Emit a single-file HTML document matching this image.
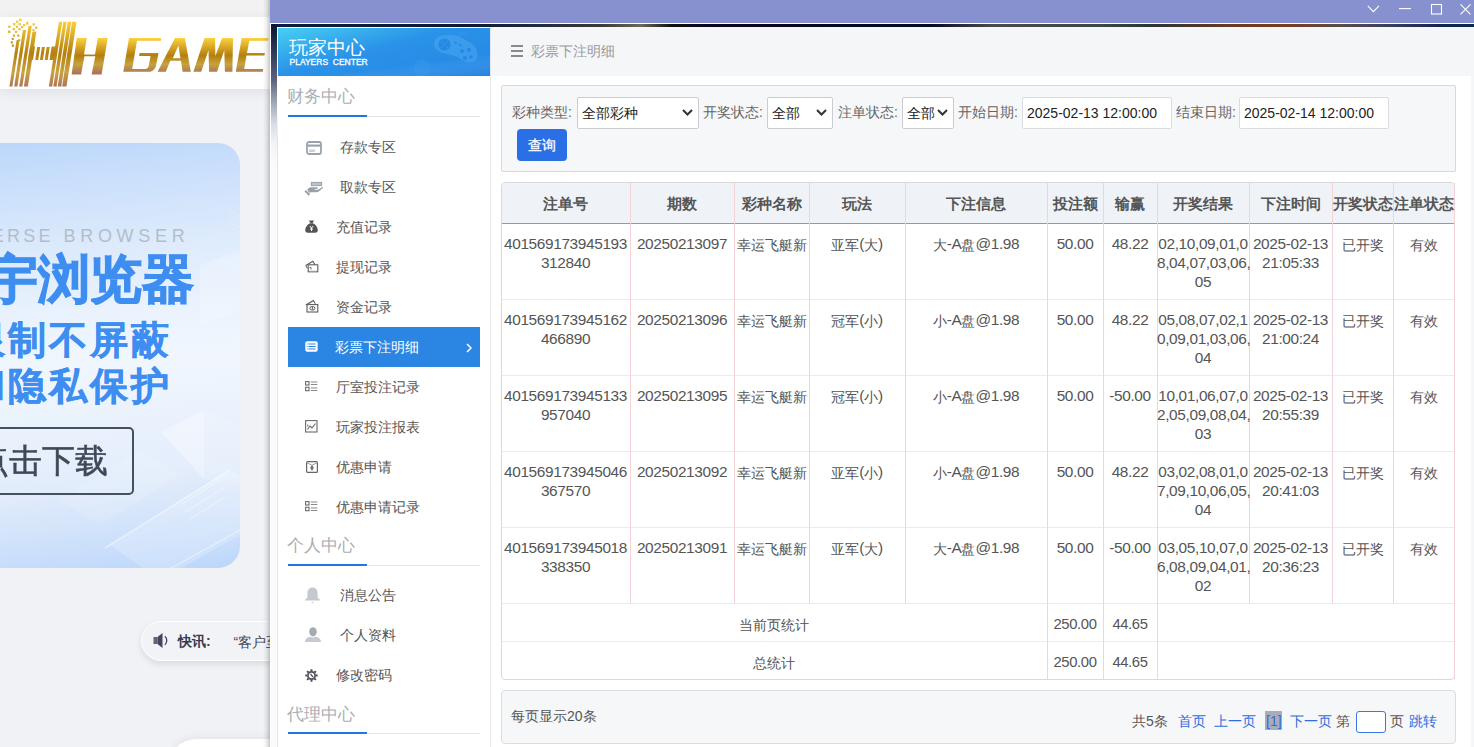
<!DOCTYPE html>
<html><head><meta charset="utf-8">
<style>
*{box-sizing:border-box;margin:0;padding:0}
html,body{width:1474px;height:747px;overflow:hidden}
body{position:relative;background:#f1f2f6;font-family:"Liberation Sans",sans-serif;color:#555}
.abs{position:absolute}
/* left page */
#topstrip{left:0;top:0;width:270px;height:17px;background:#f2f2f3}
#hdr{left:0;top:17px;width:270px;height:72px;background:#fff;box-shadow:0 3px 12px rgba(0,0,0,.08)}
#banner{left:-60px;top:143px;width:300px;height:425px;border-radius:22px;background:linear-gradient(180deg,rgba(255,255,255,0) 0%,rgba(255,255,255,.35) 50%,rgba(255,255,255,0) 100%),linear-gradient(172deg,#bad6fb 0%,#d9e8fc 30%,#e9f2fd 52%,#dde9fb 78%,#bcd7fa 100%);overflow:hidden}
#pill{left:141px;top:621px;width:200px;height:40px;border-radius:20px;background:#f2f3f7;border:1.5px solid #fff;box-shadow:0 3px 6px rgba(0,0,0,.10)}
#bshape{left:167px;top:739px;width:200px;height:60px;border-radius:32px;background:#fff;box-shadow:0 -2px 8px rgba(0,0,0,.06)}
#shadow{left:263px;top:0;width:7px;height:747px;background:linear-gradient(90deg,rgba(0,0,0,0),rgba(0,0,0,.07) 50%,rgba(0,0,0,.22))}
/* window */
#title{left:270px;top:0;width:1204px;height:23px;background:#8791cf}
#wline{left:270px;top:23px;width:1204px;height:1px;background:#fff}
#ftop{left:271px;top:24px;width:1203px;height:3px;background:linear-gradient(90deg,#0e1c3c 0px,#0d1a36 200px,#3a3a36 330px,#6a6a58 370px,#101010 400px,#060818 440px,#070a1c 660px,#4a4a4a 720px,#3e4646 830px,#2a3434 880px,#6a3a22 960px,#7a3c1e 1010px,#5a4c48 1070px,#3a3e58 1120px,#14244e 1170px,#0a2a4a 1203px)}
#fleft{left:270px;top:24px;width:7px;height:723px;background:linear-gradient(180deg,#0b1530 0px,#1e2a48 16px,#3c4664 36px,#5a6480 56px,#a3aab8 80px,#d8dce3 100px,#f3f4f6 120px,#fafafa 140px,#fafafa 100%);border-left:1px solid #fff}
#fline{left:277px;top:110px;width:1px;height:637px;background:linear-gradient(180deg,rgba(230,230,230,0),#e4e4e4 30px)}
#side{left:277px;top:27px;width:214px;height:720px;background:#fff;border-right:1px solid #e3e6eb}
#main{left:491px;top:27px;width:980px;height:720px;background:#fff}
#rstrip{left:1471px;top:27px;width:3px;height:720px;background:#f5f6f8}


/* sidebar */
#shead{left:278px;top:28px;width:212px;height:48px;background:linear-gradient(165deg,#47d0f4 0%,#34a8ec 28%,#2a92e8 45%,#2486e4 100%);overflow:hidden}
#shead .t1{position:absolute;left:11px;top:8.5px;font-size:19px;line-height:22px;color:#fff;white-space:nowrap}
#shead .t2{position:absolute;left:11.5px;top:29px;font-size:8.5px;font-weight:normal;letter-spacing:0px;-webkit-text-stroke:.3px #fff;line-height:10px;color:#fff;white-space:nowrap}
.sh{position:absolute;left:287px;font-size:17px;line-height:20px;color:#a9aeb6;white-space:nowrap}
.ul{position:absolute;left:288px;width:192px;height:1px;background:#e2e4e8}
.ul i{position:absolute;left:0;top:-1px;width:79px;height:2px;background:#1f78e0}
.mi{position:absolute;font-size:14px;line-height:18px;color:#555;white-space:nowrap}
.ico{position:absolute}
#act{left:288px;top:327px;width:192px;height:40px;background:#2b86e3}
/* main content */
#crumb{left:491px;top:27px;width:980px;height:49px;background:#f5f6f8}
#crumb .ic{position:absolute;left:20px;top:18px;width:12px;height:2.2px;background:#8a8a8a;box-shadow:0 5px 0 #8a8a8a,0 10px 0 #8a8a8a}
#crumb .tx{position:absolute;left:40px;top:15px;font-size:14px;color:#999;line-height:18px;white-space:nowrap}
#filter{left:501px;top:85px;width:955px;height:87px;background:#f6f7f9;border:1px solid #d6d9de;border-radius:2px}
.lbl{position:absolute;margin-left:1px;font-size:14px;color:#666;line-height:18px;top:103px;white-space:nowrap}
.sel{position:absolute;top:97px;height:32px;background:#fff;border:1px solid #c9ccd1;border-radius:2px;font-size:14px;color:#222;line-height:30px;padding-left:4px;white-space:nowrap}
.sel svg{position:absolute;right:5px;top:11px}
.inp{position:absolute;top:97px;height:32px;background:#fff;border:1px solid #d9dce1;border-radius:2px;font-size:14px;color:#222;line-height:30px;padding-left:4px;white-space:nowrap}
#btn{left:517px;top:129px;width:50px;height:32px;background:#2b6fe6;border-radius:4px;color:#fff;-webkit-text-stroke:.3px #fff;font-size:14px;line-height:32px;text-align:center}
#tbl{border:1px solid #d6d9de;border-radius:4px;background:#fff}
#thead{background:#eff3f7;border-radius:3px 3px 0 0}
.hl{left:502px;width:952px;height:1px;background:#e9ebee}
.vl{width:1px;background:#f3d3d6}
.th{font-size:15px;font-weight:bold;color:#555;text-align:center;line-height:40px;white-space:nowrap}
.td{font-size:15.4px;letter-spacing:-0.36px;color:#555;text-align:center;line-height:19px;padding-top:8px;white-space:nowrap}
.td .c{font-size:14px;letter-spacing:0;position:relative;top:1px}
.td.sm{line-height:38px;padding-top:2px;font-size:14.8px}
#pag{left:501px;top:690px;width:955px;height:54px;background:#f6f7f9;border:1px solid #d9dce1;border-radius:4px}
.pt{position:absolute;top:712px;font-size:14px;line-height:18px;color:#555;white-space:nowrap}
.lk{color:#2f6de0}
</style></head><body>
<div class="abs" id="topstrip"></div>
<div class="abs" id="hdr"></div>
<svg class="abs" style="left:0;top:0" width="270" height="90" viewBox="0 0 270 90">
<defs>
<linearGradient id="g1" gradientUnits="userSpaceOnUse" x1="0" y1="20" x2="0" y2="87"><stop offset="0" stop-color="#fdd440"/><stop offset=".5" stop-color="#b47f0e"/><stop offset=".78" stop-color="#c9a240"/><stop offset="1" stop-color="#ad7458"/></linearGradient>
<linearGradient id="g2" gradientUnits="userSpaceOnUse" x1="0" y1="38" x2="0" y2="73"><stop offset="0" stop-color="#fdd13e"/><stop offset=".5" stop-color="#b47f0e"/><stop offset=".75" stop-color="#c6a23e"/><stop offset="1" stop-color="#ad7458"/></linearGradient>
</defs>
<g fill="url(#g1)">
<path d="M9.40 86.4h3.0l7.18 -46.30h-3.0z"/><path d="M14.20 86.4h3.2l8.74 -56.40h-3.2z"/><path d="M19.20 86.4h3.2l9.41 -60.70h-3.2z"/><path d="M23.90 86.4h4.0l8.51 -54.90h-4.0z"/><path d="M28.00 59.9h5.0l2.06 -13.30h-5.0z"/><path d="M35.20 59.9h3.0l2.00 -12.90h-3.0z"/><path d="M39.90 59.9h3.0l2.00 -12.90h-3.0z"/><path d="M44.70 59.9h3.0l2.00 -12.90h-3.0z"/><path d="M49.50 59.9h5.0l2.06 -13.30h-5.0z"/><path d="M48.90 86.4h3.3l10.01 -64.60h-3.3z"/><path d="M53.30 86.4h3.3l10.01 -64.60h-3.3z"/><path d="M57.70 86.4h3.6l10.01 -64.60h-3.6z"/><path d="M62.10 86.4h4.4l10.01 -64.60h-4.4z"/>
<g><rect x="19" y="18.5" width="2.6" height="2.6"/><rect x="16" y="20.5" width="2.4" height="2.4"/><rect x="13" y="23" width="2.4" height="2.4"/><rect x="18.5" y="23" width="2.4" height="2.4"/><rect x="26" y="22.3" width="2.4" height="2.4"/><rect x="23" y="24" width="2.2" height="2.2"/><rect x="32.5" y="23.2" width="2.4" height="2.4"/><rect x="8.2" y="25.5" width="2.4" height="2.4"/><rect x="15.8" y="25.7" width="2.2" height="2.2"/><rect x="21" y="26" width="2.2" height="2.2"/><rect x="35" y="26.5" width="2.4" height="2.4"/><rect x="12.7" y="28" width="2.2" height="2.2"/><rect x="18.3" y="28.2" width="2.2" height="2.2"/><rect x="8" y="30.5" width="2.4" height="2.4"/><rect x="15" y="30.7" width="2.2" height="2.2"/><rect x="32.5" y="29" width="2" height="2"/><rect x="12.8" y="34.5" width="2.2" height="2.2"/><rect x="17.2" y="34.5" width="2.2" height="2.2"/><rect x="11.7" y="37.8" width="2.2" height="2.2"/><rect x="18.3" y="39.2" width="2" height="2"/><rect x="10.7" y="41.3" width="2.2" height="2.2"/><rect x="11.8" y="44.5" width="2.2" height="2.2"/><rect x="27" y="21.5" width="1.5" height="1.5"/></g>
</g>
<g fill="url(#g2)">
<path d="M71.6 74.6h9.5l3.3-18.3h10.9l-3.7 18.3h10l6.1-36.5h-9.9l-2.8 16.4H84.1l2.7-16.4h-10z"/>
</g>
<g fill="url(#g2)">
<path d="M123.3 71.8h25.1c3.5 0 7-2.5 7.8-6.9l2.3-11.8h-18.9l-.5 2.8h11.5l-1.9 10c-.5 2-2 3-3.5 3h-13l4.8-28.2H161l.2-2.8h-32.2z"/>
<path d="M157.6 71.8h8.2l4.5-11.1h10.7l1.6 11.1h8.2l-5.9-33.9H175zM172.8 58.2l5.6-12.7 2 12.7z"/>
<path d="M193.4 71.8h7.8l7.3-21.5.6 21.5h7.9l7.3-21.5.6 21.5h7.5l.6-33.9H222l-6.6 18.1-.4-18.1h-10.4z"/>
<path d="M235.8 71.8h27.1l.2-2.7h-18.9l2.3-13.5h17.9l.5-2.5h-17.9l2.3-12.4H268l.4-2.8h-26.7z"/>
</g>
</svg>
<div class="abs" id="banner"><svg style="position:absolute;left:0;top:0" width="300" height="425" viewBox="-60 143 300 425"><g fill="#fff"><path d="M161 432l43-22v69z" opacity=".35"/><path d="M204 410l36 15v60l-36-6z" opacity=".15"/><path d="M110 545l120-75 10 5v60l-80 45z" opacity=".2"/><path d="M60 500l80-50 40 25-80 50z" opacity=".12"/><path d="M200 265l40-15v60l-40 15z" opacity=".18"/></g><g stroke="#fff" fill="none" opacity=".45"><path d="M105 548l125-78" stroke-width="1.5"/><path d="M150 580l90-50" stroke-width="1.2"/><path d="M180 505l40-25M185 512l40-25M190 519l35-22" stroke-width="1"/><path d="M229 210l11 6M229 214l11 6M229 218l11 6M229 222l11 6M229 226l11 6" stroke-width=".8" opacity=".6"/></g></svg>
<div id="ub1" style="position:absolute;left:-4px;top:83px;font-size:18px;letter-spacing:3.2px;color:#b3bdca;white-space:nowrap">UNIVERSE</div><div id="ub2" style="position:absolute;left:123.5px;top:83px;font-size:18px;letter-spacing:4.7px;color:#b3bdca;white-space:nowrap">BROWSER</div>
<div style="position:absolute;left:46px;top:108px;font-size:52px;line-height:56px;font-weight:900;color:#3d8ef0;-webkit-text-stroke:1.3px #3d8ef0;white-space:nowrap">宇浏览器</div>
<div style="position:absolute;left:27px;top:175px;font-size:38px;line-height:45.5px;font-weight:900;letter-spacing:3px;color:#3d8ef0;-webkit-text-stroke:.5px #3d8ef0;white-space:nowrap">限制不屏蔽<br>和隐私保护</div>
<div style="position:absolute;left:-20px;top:284px;width:214px;height:68px;border:2.5px solid #46505e;border-radius:5px"></div>
<div style="position:absolute;left:36px;top:298px;font-size:33px;line-height:40px;font-weight:normal;-webkit-text-stroke:.5px #3f4856;color:#3f4856;white-space:nowrap">点击下载</div>
</div>
<div class="abs" id="pill"></div>
<svg class="abs" style="left:153px;top:633px" width="17" height="15" viewBox="0 0 17 15"><rect x="0.5" y="4" width="4" height="7" fill="#6b6070"/><path d="M4.5 4l5-4v15l-5-4z" fill="#3d4663"/><path d="M11.8 3.2c2.6 2 2.6 6.6 0 8.6" stroke="#3d4663" stroke-width="1.3" fill="none"/><path d="M9.5 5c1 .8 1 4.2 0 5z" fill="#c8a0a0" opacity=".6"/></svg>
<div class="abs" style="left:178px;top:632px;font-size:14px;line-height:18px;font-weight:bold;color:#353c4d;white-space:nowrap">快讯:</div>
<div class="abs" style="left:233.5px;top:633px;font-size:14px;line-height:18px;color:#3d4450;white-space:nowrap">“客户至上</div>
<div class="abs" id="bshape"></div>
<div class="abs" id="shadow"></div>

<div class="abs" id="title"></div>
<div class="abs" id="wline"></div><svg class="abs" style="left:1360px;top:0" width="114" height="20" viewBox="0 0 114 20"><g fill="none" stroke="#fff" stroke-width="1.1"><path d="M7.8 5.8l5.6 5.8 5.6-5.8"/><path d="M39 8.6h12"/><rect x="71.5" y="4.5" width="10" height="9.5"/><path d="M100.5 4.3l10 10M110.5 4.3l-10 10"/></g></svg>
<div class="abs" id="ftop"></div>
<div class="abs" id="fleft"></div>
<div class="abs" id="side"></div><div class="abs" id="fline"></div>
<div class="abs" id="main"></div>
<div class="abs" id="shead"><div class="t1">玩家中心</div><div class="t2">PLAYERS&nbsp; CENTER</div>
<svg style="position:absolute;left:0;top:0" width="212" height="48" viewBox="278 28 212 48"><defs><linearGradient id="hb" x1="0" y1="0" x2="1" y2="1"><stop offset="0" stop-color="#fff" stop-opacity="0"/><stop offset=".6" stop-color="#fff" stop-opacity="0"/><stop offset="1" stop-color="#1c6fd8" stop-opacity=".25"/></linearGradient></defs><path d="M278 76L490 48V76z" fill="url(#hb)"/><g opacity=".55"><path d="M434 44C434 35 447 33 458 36L471 43C479 48 480 60 472 62C466 63 461 59 455 56L443 53C437 51 434 48 434 44z" fill="#4aa8f0"/><circle cx="444.4" cy="44.4" r="6" fill="#2584e2"/><path d="M441 41l7 7M448 41l-7 7" stroke="#3a9aee" stroke-width="1"/><path d="M454 42l3 1.5M459 44.5l3 1.5" stroke="#2584e2" stroke-width="1.6"/><circle cx="462" cy="51" r="2" fill="#2584e2"/><circle cx="469" cy="50" r="2" fill="#2584e2"/><circle cx="465" cy="58" r="2" fill="#2584e2"/><circle cx="471" cy="57" r="1.8" fill="#2584e2"/><path d="M459 37c0-3 3-4 5-3s3-1 3-3" stroke="#4aa8f0" stroke-width="1" fill="none"/><circle cx="422" cy="68" r="8.5" fill="#3c9cec" opacity=".7"/></g></svg></div>
<div class="sh" style="top:87px">财务中心</div>
<div class="ul" style="top:116px"><i></i></div>
<svg class="ico" style="left:306px;top:141px" width="16" height="14" viewBox="0 0 16 14"><rect x="1" y="1" width="14" height="12" rx="2" fill="none" stroke="#9aa3ab" stroke-width="1.8"/><rect x="1" y="3.5" width="14" height="2.2" fill="#9aa3ab"/><path d="M4 8.5v2.5M6 8.5v2.5M8 8.5v2.5" stroke="#9aa3ab" stroke-width="1"/></svg>
<div class="mi" style="left:340px;top:138px">存款专区</div>
<svg class="ico" style="left:304px;top:181px" width="20" height="15" viewBox="0 0 20 15"><rect x="7.4" y="1.4" width="10.2" height="3.2" fill="#bcc3ca" stroke="#98a1aa" stroke-width="1"/><path d="M3.2 8.5C4.5 6.8 6 6.3 8 6.3h5.2c.8 0 .8 1.2 0 1.4L9.8 8.4c1.3.5 3.3.5 4.6 0l3.8-2.3c.6-.3 1.1.3.6.9l-3.3 3c-1 .8-2.2 1.2-3.6 1.2H6.5l-1.3.8z" fill="#98a1aa"/><path d="M1.2 9.8l4.2 4.2" stroke="#98a1aa" stroke-width="2"/></svg>
<div class="mi" style="left:340px;top:178px">取款专区</div>
<svg class="ico" style="left:305px;top:220px" width="13" height="13" viewBox="0 0 13 13"><path d="M4 0.5h5l-1.3 2.5h-2.4z" fill="#555"/><path d="M5 3.3h3c3 1.5 4.8 4.5 4.8 6.7 0 1.8-1 2.7-2.5 2.7H2.7C1.2 12.7.2 11.8.2 10c0-2.2 1.8-5.2 4.8-6.7z" fill="#555"/><path d="M4.8 6l1.7 2 1.7-2M6.5 8v3M5 9h3" stroke="#fff" stroke-width="1" fill="none"/></svg>
<div class="mi" style="left:336px;top:218px">充值记录</div>
<svg class="ico" style="left:305px;top:260px" width="14" height="13" viewBox="0 0 14 13"><path d="M0.8 5.5l7-4.3 2.2 3.6" fill="none" stroke="#5c5c60" stroke-width="1.1"/><path d="M0.8 5.5l1.5 3" fill="none" stroke="#5c5c60" stroke-width="1"/><rect x="3.2" y="4.8" width="9.6" height="7" fill="#fff" stroke="#5c5c60" stroke-width="1.1"/><path d="M4.5 7.5h1.5v2" stroke="#5c7090" stroke-width="1" fill="none"/><path d="M4 11.3h8" stroke="#9a9aa0" stroke-width="1"/></svg>
<div class="mi" style="left:336px;top:258px">提现记录</div>
<svg class="ico" style="left:305px;top:299px" width="14" height="14" viewBox="0 0 14 14"><path d="M0.8 6l7.5-4.5 2 3.3" fill="none" stroke="#5c5c60" stroke-width="1.1"/><path d="M3.5 5l4.5-2.7" stroke="#8a8a90" stroke-width="1"/><rect x="2" y="5.6" width="10.8" height="7.4" fill="#fff" stroke="#5c5c60" stroke-width="1.1"/><ellipse cx="7.4" cy="9.3" rx="2.6" ry="1.8" fill="none" stroke="#5c5c60" stroke-width="1"/><path d="M7.4 8v2.6" stroke="#5c5c60" stroke-width="1"/></svg>
<div class="mi" style="left:336px;top:298px">资金记录</div>
<div class="abs" id="act"></div>
<svg class="ico" style="left:305px;top:341px" width="13" height="11" viewBox="0 0 13 11"><rect x="0.3" y="0.3" width="12.4" height="10.4" rx="2" fill="#fff"/><path d="M3.5 3h7M3.5 5.5h7M3.5 8h7" stroke="#2b86e3" stroke-width="1.1"/><path d="M1.8 3h.8M1.8 5.5h.8M1.8 8h.8" stroke="#2b86e3" stroke-width="1.1"/></svg>
<div class="mi" style="left:335px;top:338px;color:#fff">彩票下注明细</div>
<svg class="ico" style="left:466px;top:343px" width="7" height="10" viewBox="0 0 7 10"><path d="M1 1l4 4-4 4" fill="none" stroke="#fff" stroke-width="1.5"/></svg>
<svg class="ico" style="left:305px;top:381px" width="13" height="11" viewBox="0 0 13 11"><rect x="0.6" y="0.6" width="3.4" height="3.4" fill="none" stroke="#6a6a70" stroke-width="1.1"/><rect x="0.6" y="6.3" width="3.4" height="3.4" fill="none" stroke="#6a6a70" stroke-width="1.1"/><path d="M5.8 1h6.5M5.8 3.5h6.5M5.8 7h6.5M5.8 9.5h6.5" stroke="#7a7a80" stroke-width=".9"/></svg>
<div class="mi" style="left:336px;top:378px">厅室投注记录</div>
<svg class="ico" style="left:305px;top:420px" width="13" height="13" viewBox="0 0 13 13"><rect x="0.6" y="0.6" width="11.4" height="11.4" fill="none" stroke="#6a6a70" stroke-width="1.1"/><path d="M2.5 9.5l2.5-3.5 2 2 3.5-4.5" fill="none" stroke="#666" stroke-width="1.1"/><path d="M2.8 4.5v2" stroke="#666" stroke-width="1"/></svg>
<div class="mi" style="left:336px;top:418px">玩家投注报表</div>
<svg class="ico" style="left:306px;top:461px" width="12" height="12" viewBox="0 0 12 12"><rect x="0.6" y="0.6" width="10.8" height="10.8" rx="1" fill="none" stroke="#666" stroke-width="1.2"/><path d="M0.6 1.5l5.4 2.8 5.4-2.8" fill="none" stroke="#999" stroke-width="1"/><path d="M6 4.5c1.3 0 1.8 1.5 1.5 3l-1.5 2.5-1.5-2.5c-.3-1.5.2-3 1.5-3z" fill="#777"/></svg>
<div class="mi" style="left:336px;top:458px">优惠申请</div>
<svg class="ico" style="left:305px;top:501px" width="13" height="11" viewBox="0 0 13 11"><rect x="0.6" y="0.6" width="3.4" height="3.4" fill="none" stroke="#6a6a70" stroke-width="1.1"/><rect x="0.6" y="6.3" width="3.4" height="3.4" fill="none" stroke="#6a6a70" stroke-width="1.1"/><path d="M5.8 1h6.5M5.8 3.5h6.5M5.8 7h6.5M5.8 9.5h6.5" stroke="#7a7a80" stroke-width=".9"/></svg>
<div class="mi" style="left:336px;top:498px">优惠申请记录</div>
<div class="sh" style="top:536px">个人中心</div>
<div class="ul" style="top:565px"><i></i></div>
<svg class="ico" style="left:304px;top:587px" width="17" height="17" viewBox="0 0 15 15"><path d="M7.5 0.5c-3 0-4.5 2.3-4.5 5v3.8L1 11.3v.7h13v-.7l-2-2V5.5c0-2.7-1.5-5-4.5-5z" fill="#c4c9cf"/><path d="M6.3 13.2h2.4l-1.2 1.2z" fill="#c4c9cf"/></svg>
<div class="mi" style="left:340px;top:586px">消息公告</div>
<svg class="ico" style="left:305px;top:627px" width="16" height="15" viewBox="0 0 16 15"><ellipse cx="8" cy="4.8" rx="3.8" ry="4.6" fill="#a3abb3"/><path d="M0 15c0-3 2.5-4.8 5.5-5.2l2.5 1 2.5-1c3 .4 5.5 2.2 5.5 5.2z" fill="#c4cad0"/></svg>
<div class="mi" style="left:340px;top:626px">个人资料</div>
<svg class="ico" style="left:305px;top:668.5px" width="13" height="13" viewBox="0 0 13 13"><circle cx="6.5" cy="6.5" r="3.6" fill="none" stroke="#50505a" stroke-width="1.7"/><path d="M10.70 6.50L12.70 6.50M9.47 9.47L10.88 10.88M6.50 10.70L6.50 12.70M3.53 9.47L2.12 10.88M2.30 6.50L0.30 6.50M3.53 3.53L2.12 2.12M6.50 2.30L6.50 0.30M9.47 3.53L10.88 2.12" stroke="#50505a" stroke-width="2"/><path d="M5.5 5l2.5 3" stroke="#50505a" stroke-width="1.2"/></svg>
<div class="mi" style="left:336px;top:666px">修改密码</div>
<div class="sh" style="top:705px">代理中心</div>
<div class="ul" style="top:733px"><i></i></div>

<div class="abs" id="rstrip"></div>
<div class="abs" id="crumb"><div class="ic"></div><div class="tx">彩票下注明细</div></div>
<div class="abs" id="filter"></div>
<div class="lbl" style="left:511px">彩种类型:</div>
<div class="sel" style="left:577px;width:122px">全部彩种<svg width="11" height="7" viewBox="0 0 11 7"><path d="M1 1l4.5 4.5L10 1" fill="none" stroke="#333" stroke-width="2"/></svg></div>
<div class="lbl" style="left:702px">开奖状态:</div>
<div class="sel" style="left:767px;width:66px">全部<svg width="11" height="7" viewBox="0 0 11 7"><path d="M1 1l4.5 4.5L10 1" fill="none" stroke="#333" stroke-width="2"/></svg></div>
<div class="lbl" style="left:837px">注单状态:</div>
<div class="sel" style="left:902px;width:52px">全部<svg width="11" height="7" viewBox="0 0 11 7"><path d="M1 1l4.5 4.5L10 1" fill="none" stroke="#333" stroke-width="2"/></svg></div>
<div class="lbl" style="left:957px">开始日期:</div>
<div class="inp" style="left:1022px;width:150px">2025-02-13 12:00:00</div>
<div class="lbl" style="left:1175px">结束日期:</div>
<div class="inp" style="left:1239px;width:150px">2025-02-14 12:00:00</div>
<div class="abs" id="btn">查询</div>
<div class="abs" id="tbl" style="left:501px;top:182px;width:954px;height:498px"></div>
<div class="abs" id="thead" style="left:502px;top:183px;width:952px;height:40px"></div>
<div class="abs" style="left:502px;top:223px;width:952px;height:1px;background:#a39595"></div>
<div class="abs hl" style="top:299px"></div>
<div class="abs hl" style="top:375px"></div>
<div class="abs hl" style="top:451px"></div>
<div class="abs hl" style="top:527px"></div>
<div class="abs hl" style="top:603px"></div>
<div class="abs hl" style="top:641px"></div>
<div class="abs vl" style="left:630px;top:183px;height:420px"></div>
<div class="abs vl" style="left:734px;top:183px;height:420px"></div>
<div class="abs vl" style="left:809px;top:183px;height:420px"></div>
<div class="abs vl" style="left:905px;top:183px;height:420px"></div>
<div class="abs vl" style="left:1047px;top:183px;height:420px"></div>
<div class="abs vl" style="left:1103px;top:183px;height:420px"></div>
<div class="abs vl" style="left:1157px;top:183px;height:420px"></div>
<div class="abs vl" style="left:1249px;top:183px;height:420px"></div>
<div class="abs vl" style="left:1332px;top:183px;height:420px"></div>
<div class="abs vl" style="left:1393px;top:183px;height:420px"></div>
<div class="abs vl" style="left:1047px;top:603px;height:76px"></div>
<div class="abs vl" style="left:1103px;top:603px;height:76px"></div>
<div class="abs vl" style="left:1157px;top:603px;height:76px"></div>
<div class="abs vl" style="left:1454px;top:183px;height:496px"></div>
<div class="abs th" style="left:501px;width:129px;top:184px">注单号</div>
<div class="abs th" style="left:630px;width:104px;top:184px">期数</div>
<div class="abs th" style="left:734px;width:75px;top:184px">彩种名称</div>
<div class="abs th" style="left:809px;width:96px;top:184px">玩法</div>
<div class="abs th" style="left:905px;width:142px;top:184px">下注信息</div>
<div class="abs th" style="left:1047px;width:56px;top:184px">投注额</div>
<div class="abs th" style="left:1103px;width:54px;top:184px">输赢</div>
<div class="abs th" style="left:1157px;width:92px;top:184px">开奖结果</div>
<div class="abs th" style="left:1249px;width:83px;top:184px">下注时间</div>
<div class="abs th" style="left:1332px;width:61px;top:184px">开奖状态</div>
<div class="abs th" style="left:1393px;width:62px;top:184px">注单状态</div>
<div class="abs td" style="left:501px;width:129px;top:226px">401569173945193<br>312840</div>
<div class="abs td" style="left:630px;width:104px;top:226px">20250213097</div>
<div class="abs td" style="left:734px;width:75px;top:226px"><span class="c">幸运飞艇新</span></div>
<div class="abs td" style="left:809px;width:96px;top:226px"><span class="c">亚军</span>(<span class="c">大</span>)</div>
<div class="abs td" style="left:905px;width:142px;top:226px"><span class="c">大</span>-A<span class="c">盘</span>@1.98</div>
<div class="abs td" style="left:1047px;width:56px;top:226px">50.00</div>
<div class="abs td" style="left:1103px;width:54px;top:226px">48.22</div>
<div class="abs td" style="left:1157px;width:92px;top:226px">02,10,09,01,0<br>8,04,07,03,06,<br>05</div>
<div class="abs td" style="left:1249px;width:83px;top:226px">2025-02-13<br>21:05:33</div>
<div class="abs td" style="left:1332px;width:61px;top:226px"><span class="c">已开奖</span></div>
<div class="abs td" style="left:1393px;width:62px;top:226px"><span class="c">有效</span></div>
<div class="abs td" style="left:501px;width:129px;top:302px">401569173945162<br>466890</div>
<div class="abs td" style="left:630px;width:104px;top:302px">20250213096</div>
<div class="abs td" style="left:734px;width:75px;top:302px"><span class="c">幸运飞艇新</span></div>
<div class="abs td" style="left:809px;width:96px;top:302px"><span class="c">冠军</span>(<span class="c">小</span>)</div>
<div class="abs td" style="left:905px;width:142px;top:302px"><span class="c">小</span>-A<span class="c">盘</span>@1.98</div>
<div class="abs td" style="left:1047px;width:56px;top:302px">50.00</div>
<div class="abs td" style="left:1103px;width:54px;top:302px">48.22</div>
<div class="abs td" style="left:1157px;width:92px;top:302px">05,08,07,02,1<br>0,09,01,03,06,<br>04</div>
<div class="abs td" style="left:1249px;width:83px;top:302px">2025-02-13<br>21:00:24</div>
<div class="abs td" style="left:1332px;width:61px;top:302px"><span class="c">已开奖</span></div>
<div class="abs td" style="left:1393px;width:62px;top:302px"><span class="c">有效</span></div>
<div class="abs td" style="left:501px;width:129px;top:378px">401569173945133<br>957040</div>
<div class="abs td" style="left:630px;width:104px;top:378px">20250213095</div>
<div class="abs td" style="left:734px;width:75px;top:378px"><span class="c">幸运飞艇新</span></div>
<div class="abs td" style="left:809px;width:96px;top:378px"><span class="c">冠军</span>(<span class="c">小</span>)</div>
<div class="abs td" style="left:905px;width:142px;top:378px"><span class="c">小</span>-A<span class="c">盘</span>@1.98</div>
<div class="abs td" style="left:1047px;width:56px;top:378px">50.00</div>
<div class="abs td" style="left:1103px;width:54px;top:378px">-50.00</div>
<div class="abs td" style="left:1157px;width:92px;top:378px">10,01,06,07,0<br>2,05,09,08,04,<br>03</div>
<div class="abs td" style="left:1249px;width:83px;top:378px">2025-02-13<br>20:55:39</div>
<div class="abs td" style="left:1332px;width:61px;top:378px"><span class="c">已开奖</span></div>
<div class="abs td" style="left:1393px;width:62px;top:378px"><span class="c">有效</span></div>
<div class="abs td" style="left:501px;width:129px;top:454px">401569173945046<br>367570</div>
<div class="abs td" style="left:630px;width:104px;top:454px">20250213092</div>
<div class="abs td" style="left:734px;width:75px;top:454px"><span class="c">幸运飞艇新</span></div>
<div class="abs td" style="left:809px;width:96px;top:454px"><span class="c">亚军</span>(<span class="c">小</span>)</div>
<div class="abs td" style="left:905px;width:142px;top:454px"><span class="c">小</span>-A<span class="c">盘</span>@1.98</div>
<div class="abs td" style="left:1047px;width:56px;top:454px">50.00</div>
<div class="abs td" style="left:1103px;width:54px;top:454px">48.22</div>
<div class="abs td" style="left:1157px;width:92px;top:454px">03,02,08,01,0<br>7,09,10,06,05,<br>04</div>
<div class="abs td" style="left:1249px;width:83px;top:454px">2025-02-13<br>20:41:03</div>
<div class="abs td" style="left:1332px;width:61px;top:454px"><span class="c">已开奖</span></div>
<div class="abs td" style="left:1393px;width:62px;top:454px"><span class="c">有效</span></div>
<div class="abs td" style="left:501px;width:129px;top:530px">401569173945018<br>338350</div>
<div class="abs td" style="left:630px;width:104px;top:530px">20250213091</div>
<div class="abs td" style="left:734px;width:75px;top:530px"><span class="c">幸运飞艇新</span></div>
<div class="abs td" style="left:809px;width:96px;top:530px"><span class="c">亚军</span>(<span class="c">大</span>)</div>
<div class="abs td" style="left:905px;width:142px;top:530px"><span class="c">大</span>-A<span class="c">盘</span>@1.98</div>
<div class="abs td" style="left:1047px;width:56px;top:530px">50.00</div>
<div class="abs td" style="left:1103px;width:54px;top:530px">-50.00</div>
<div class="abs td" style="left:1157px;width:92px;top:530px">03,05,10,07,0<br>6,08,09,04,01,<br>02</div>
<div class="abs td" style="left:1249px;width:83px;top:530px">2025-02-13<br>20:36:23</div>
<div class="abs td" style="left:1332px;width:61px;top:530px"><span class="c">已开奖</span></div>
<div class="abs td" style="left:1393px;width:62px;top:530px"><span class="c">有效</span></div>
<div class="abs td sm" style="left:501px;width:546px;top:603px"><span class="c">当前页统计</span></div>
<div class="abs td sm" style="left:1047px;width:56px;top:603px">250.00</div>
<div class="abs td sm" style="left:1103px;width:54px;top:603px">44.65</div>
<div class="abs td sm" style="left:501px;width:546px;top:641px"><span class="c">总统计</span></div>
<div class="abs td sm" style="left:1047px;width:56px;top:641px">250.00</div>
<div class="abs td sm" style="left:1103px;width:54px;top:641px">44.65</div>
<div class="abs" id="pag"></div>
<div class="pt" style="left:511px;top:707px">每页显示20条</div>
<div class="pt" style="left:1132px">共5条</div>
<div class="pt lk" style="left:1178px">首页</div>
<div class="pt lk" style="left:1214px">上一页</div>
<div class="abs" style="left:1265px;top:711px;width:17px;height:19px;background:#aaabbd"></div>
<div class="pt lk" style="left:1266px">[1]</div>
<div class="pt lk" style="left:1290px">下一页</div>
<div class="pt" style="left:1336px">第</div>
<div class="abs" style="left:1356px;top:711px;width:30px;height:22px;background:#fff;border:1.5px solid #3a78e8;border-radius:3px"></div>
<div class="pt" style="left:1390px">页</div>
<div class="pt lk" style="left:1409px">跳转</div>

</body></html>
